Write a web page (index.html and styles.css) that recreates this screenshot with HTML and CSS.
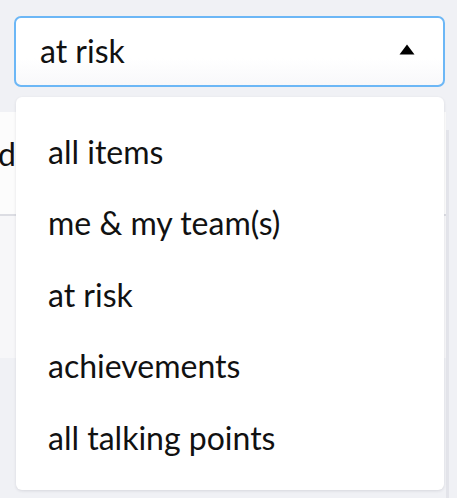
FILE: index.html
```html
<!DOCTYPE html>
<html>
<head>
<meta charset="utf-8">
<link rel="stylesheet" href="styles.css">
</head>
<body>
<div class="page">
  <div class="select">
    <span class="select-value">at risk</span>
    <svg class="caret" width="16" height="11" viewBox="0 0 16 11"><path d="M8 0.5 L15.5 10.5 L0.5 10.5 Z" fill="#000"/></svg>
  </div>
  <div class="backdrop">
    <div class="bg-card"><span class="bg-text">d</span></div>
    <div class="bg-light"></div>
    <div class="bg-rail"></div>
  </div>
  <ul class="menu">
    <li class="menu-item">all items</li>
    <li class="menu-item">me &amp; my team(s)</li>
    <li class="menu-item">at risk</li>
    <li class="menu-item">achievements</li>
    <li class="menu-item">all talking points</li>
  </ul>
</div>
</body>
</html>
```
FILE: styles.css
```css
* { box-sizing: border-box; }
html, body { margin: 0; padding: 0; }
body {
  background: #f0f1f5;
  font-family: Lato, "Open Sans", sans-serif;
  color: #111;
  width: 457px;
  height: 498px;
  overflow: hidden;
}
.page {
  position: relative;
  padding: 16px 12px 0 14px;
  height: 498px;
  overflow: hidden;
}
.select {
  height: 71px;
  border: 2px solid #6cb7f6;
  border-radius: 7px;
  background: linear-gradient(#ffffff 60%, #f8f8fa);
  display: flex;
  align-items: center;
  justify-content: space-between;
  padding: 0 28px 0 24px;
}
.select-value {
  font-size: 32px;
  line-height: 1;
  padding-bottom: 2px;
}
.caret { display: block; margin-top: -4px; }
.backdrop {
  position: relative;
  margin: 25px -12px 0 -14px;
  display: flex;
  flex-direction: column;
}
.bg-card {
  height: 104px;
  width: 446px;
  background: #fcfcfc;
  border-bottom: 2px solid #dcdde3;
  padding-top: 26px;
}
.bg-text {
  font-size: 32px;
  line-height: 1;
  display: block;
  margin-left: -2px;
}
.bg-light {
  height: 142px;
  width: 446px;
  background: #f7f7f9;
}
.bg-rail {
  position: absolute;
  left: 446px;
  top: 18px;
  width: 3px;
  height: 368px;
  background: #e3e4ea;
}
.menu {
  position: absolute;
  top: 97px;
  left: 16px;
  width: 428px;
  height: 393px;
  margin: 0;
  padding: 19px 0 0 32px;
  list-style: none;
  background: #fff;
  border-radius: 6px;
  box-shadow: 0 1px 3px rgba(30, 35, 60, 0.12);
}
.menu-item {
  height: 71.5px;
  display: flex;
  align-items: center;
  font-size: 32px;
  line-height: 1;
}
```
